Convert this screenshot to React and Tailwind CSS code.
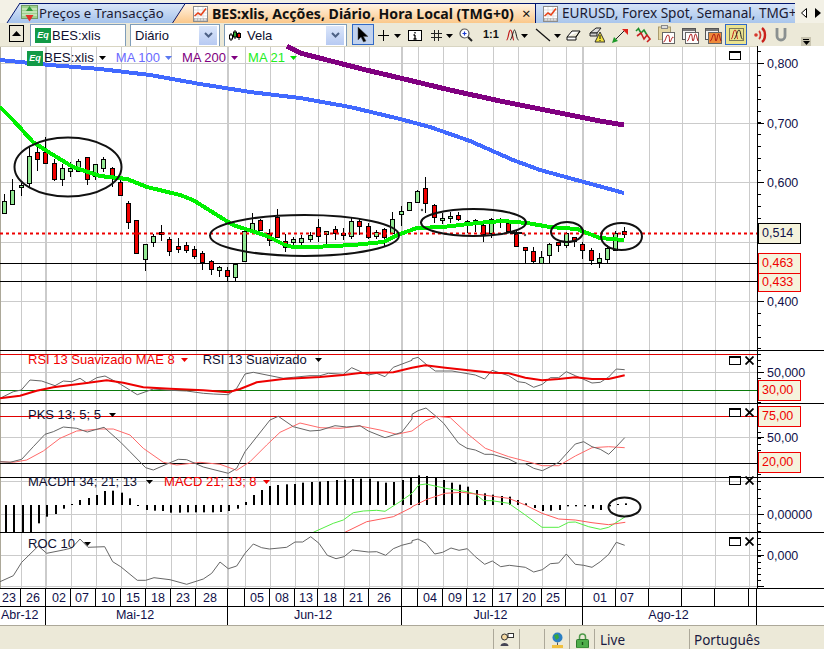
import React from "react";

const VX = [[21],[46,1],[71],[96],[121],[146],[171],[196],[228,1],[245],[270],[295],[318],[344],[369],[402,1],[418],[443],[467],[493],[518],[542],[566],[583,1],[616],[649],[682],[715],[749]];

const scale = (ox, oy) => (pts) => pts.map(([x, y]) => `${(ox + x / 3).toFixed(1)},${(oy + y / 3).toFixed(1)}`).join(" ");
const Z6 = scale(0, 345), Z7 = scale(412, 345), Z8 = scale(0, 470), Z9 = scale(412, 470);

const raw3 = [[13,282,304,338,340,"g"],[37,237,271,313,314,"g"],[64,248,255,262,288,"g"],[88,140,168,248,262,"g"],[112,130,156,176,212,"r"],[136,112,157,190,192,"r"],[163,178,190,236,242,"r"],[187,192,205,236,257,"g"],[211,187,205,212,230,"g"],[235,178,184,212,212,"g"],[262,172,172,236,254,"r"],[286,192,193,228,240,"g"],[310,172,178,203,216,"g"],[337,200,204,228,260,"r"],[361,240,246,284,287,"r"],[385,303,310,367,386,"r"],[409,360,361,458,460,"r"],[436,432,433,476,512,"g"],[460,402,408,425,440,"g"],[484,375,397,403,422,"r"],[508,412,418,452,468,"r"],[535,414,438,446,458,"r"],[559,426,435,449,460,"r"],[583,438,448,467,478,"r"],[607,452,460,485,510,"r"],[634,480,484,508,525,"r"],[658,498,502,509,530,"g"],[682,502,511,529,545,"r"],[706,488,492,532,542,"g"],[733,394,394,482,482,"g"],[757,340,370,389,390,"g"],[781,358,361,390,392,"r"],[806,388,400,420,438,"r"]];
const raw4 = [[22,147,170,232,235,"r"],[46,222,244,262,275,"r"],[70,230,238,245,258,"g"],[94,225,234,245,258,"g"],[121,215,225,236,245,"g"],[145,178,200,229,245,"r"],[169,214,214,223,252,"g"],[196,198,208,218,240,"r"],[220,204,218,224,240,"r"],[244,172,184,229,238,"g"],[268,178,182,198,225,"r"],[295,190,198,230,236,"r"],[319,210,216,228,236,"g"],[343,205,208,232,258,"r"],[367,157,178,218,220,"g"],[394,138,154,161,197,"g"],[418,125,126,149,152,"g"],[442,90,93,127,130,"g"],[466,52,85,130,160,"r"],[493,132,136,172,188,"r"],[517,158,175,181,192,"g"],[541,155,168,175,190,"g"],[565,155,165,178,182,"r"],[592,180,184,186,218,"g"],[616,178,181,185,215,"g"],[640,192,196,222,245,"r"],[664,175,176,220,235,"g"],[691,175,178,182,203,"g"],[715,190,190,212,215,"r"],[739,214,222,257,258,"r"]];
const raw5 = [[75,232,232,241,283,"r"],[99,232,244,274,283,"r"],[124,244,262,280,283,"g"],[148,218,222,256,278,"g"],[175,215,216,224,245,"r"],[199,185,188,226,234,"g"],[223,202,202,213,232,"r"],[247,215,222,240,266,"r"],[274,235,241,271,284,"r"],[298,250,265,275,293,"g"],[322,225,235,268,280,"g"],[346,182,188,241,244,"g"],[373,172,184,191,205,"r"]];
const conv = (ox, oy, arr) => arr.map(([x, a, b, c, d, k]) => ({ x: Math.round(ox + x / 3), wt: Math.round(oy + a / 3), bt: Math.round(oy + b / 3), bb: Math.round(oy + c / 3), wb: Math.round(oy + d / 3), k }));
const candles = [...conv(0, 100, raw3), ...conv(270, 160, raw4), ...conv(500, 170, raw5)];

const MA100 = "0,60 50,65 100,69 150,75 200,84 250,92 300,98 350,107 400,119 430,127 470,141 513,160 540,170 624,193";
const MA200 = "287,46 300,53 366,70 400,78 450,90 500,101 550,111 600,121 624,125";
const MA21 = "0,107 13,120 33,142 50,153 73,167 100,176 127,179 147,187 180,195 193,200 217,215 233,225 267,236 285,245 293,247 313,247 353,245 383,242 400,234 417,228 443,227 477,223 503,221 527,223 550,227 577,229 587,233 600,238 624,240";

const rsiK = Z6([[0,160],[40,140],[64,135],[90,105],[125,108],[165,122],[190,108],[215,110],[240,100],[262,115],[290,98],[315,93],[362,118],[412,149],[460,132],[510,136],[560,138],[610,145],[640,147],[685,149],[710,130],[735,87],[760,82],[850,100],[880,97],[930,92],[960,92],[985,85],[1030,88],[1055,68],[1105,90],[1130,85],[1155,95],[1180,67],[1236,46]]) + " " + Z7([[0,42],[18,37],[45,60],[70,78],[120,78],[190,90],[218,102],[240,76],[290,92],[318,110],[340,113],[365,127],[391,118],[415,98],[440,98],[463,80],[490,92],[540,114],[565,112],[590,96],[613,72],[638,74]]);
const rsiR = Z6([[0,160],[60,152],[110,137],[160,127],[260,114],[320,106],[370,113],[430,127],[510,131],[610,136],[685,142],[720,132],[770,112],[850,102],[960,96],[1030,90],[1080,84],[1180,82],[1236,68]]) + " " + Z7([[0,68],[40,61],[100,68],[190,78],[240,83],[290,85],[340,98],[390,106],[440,102],[490,97],[540,102],[590,102],[638,91]]);
const pksK = Z6([[0,350],[30,352],[65,343],[100,305],[135,268],[160,260],[190,246],[230,250],[262,261],[312,247],[362,292],[390,320],[437,368],[460,375],[510,353],[535,343],[560,344],[610,366],[685,385],[710,370],[735,320],[810,225],[835,214],[880,245],[930,258],[960,256],[1005,242],[1040,246],[1080,242],[1105,258],[1155,278],[1205,262],[1236,222]]) + " " + Z7([[0,208],[18,197],[42,189],[70,212],[95,235],[140,295],[165,310],[190,315],[218,328],[240,328],[290,342],[318,356],[340,356],[365,370],[391,377],[415,365],[440,352],[490,297],[515,290],[540,305],[565,313],[590,328],[613,305],[638,278]]);
const pksR = Z6([[0,350],[40,352],[80,345],[130,318],[180,280],[230,258],[300,252],[340,252],[390,270],[430,310],[490,352],[530,360],[600,352],[660,358],[710,376],[750,350],[800,300],[840,262],[900,234],[960,248],[1020,250],[1080,243],[1140,255],[1190,268],[1236,258]]) + " " + Z7([[0,258],[40,228],[75,214],[115,218],[165,265],[220,310],[290,335],[340,348],[391,362],[440,362],[490,333],[540,308],[590,305],[638,308]]);
const macdG = Z8([[940,187],[1000,160],[1030,150],[1060,128],[1090,123],[1130,121],[1155,124],[1200,95],[1236,70]]) + " " + Z9([[0,70],[20,45],[42,42],[100,55],[165,65],[190,72],[215,92],[240,92],[290,100],[340,135],[390,172],[440,172],[470,157],[490,156],[530,170],[565,178],[590,172],[640,140]]);
const macdR = Z8([[1035,187],[1100,155],[1180,140],[1236,112]]) + " " + Z9([[0,110],[45,88],[100,70],[150,67],[190,72],[290,85],[340,105],[390,130],[440,147],[490,150],[540,158],[590,164],[640,157]]);
const roc = Z8([[0,335],[40,317],[65,277],[115,228],[140,250],[190,240],[215,234],[240,207],[264,232],[314,230],[338,275],[362,290],[412,331],[437,331],[462,323],[510,329],[560,343],[610,327],[635,310],[660,276],[685,296],[710,288],[735,250],[760,222],[785,233],[808,237],[860,232],[885,216],[908,216],[932,200],[957,220],[982,256],[1008,266],[1032,260],[1057,240],[1105,246],[1130,245],[1157,256],[1180,236],[1205,226],[1236,218]]) + " " + Z9([[0,212],[18,207],[42,220],[68,252],[92,247],[117,234],[141,241],[166,236],[190,260],[218,283],[241,273],[266,290],[292,286],[340,292],[365,306],[391,299],[415,281],[440,279],[463,252],[490,283],[515,286],[540,292],[565,275],[590,253],[613,217],[638,226]]);

const barsZ8 = [[14,187],[40,187],[66,187],[90,187],[114,160],[138,140],[164,132],[188,116],[212,102],[237,90],[264,84],[288,75],[313,63],[337,62],[362,68],[387,85],[412,107],[437,120],[462,122],[487,123],[510,128],[536,128],[560,127],[585,127],[610,127],[635,127],[660,126],[685,123],[710,116],[735,96],[758,75],[782,60],[807,48],[832,45],[857,43],[882,42],[907,38],[932,36],[957,35],[982,33],[1007,30],[1032,29],[1057,27],[1081,26],[1106,26],[1130,34],[1155,38],[1180,36],[1205,30],[1230,22]];
const barsZ9 = [[17,16],[42,18],[68,22],[93,30],[117,38],[141,44],[166,50],[192,60],[216,70],[240,74],[266,78],[290,80],[315,90],[340,100],[365,114],[390,123],[415,122],[441,120],[465,109],[490,109],[515,109],[540,116],[565,120],[590,109],[615,102],[640,100]];
const macdBars = [...barsZ8.map(([x, y]) => [x / 3, y]), ...barsZ9.map(([x, y]) => [412 + x / 3, y])];

function Grid({ y0, y1, hs }) {
  return (
    <g>
      {VX.map(([x, t]) => (
        <line key={x} x1={x + (t ? 0 : 0.5)} x2={x + (t ? 0 : 0.5)} y1={y0} y2={y1} stroke="#cbcbcb" strokeWidth={t ? 2 : 1} />
      ))}
      {hs.map((y) => (
        <line key={y} x1="0" x2="757" y1={y + 0.5} y2={y + 0.5} stroke="#cbcbcb" strokeWidth="1" />
      ))}
      <line x1="0.5" x2="0.5" y1={y0} y2={y1} stroke="#aca899" />
    </g>
  );
}

function Plot({ top, h, hs, children }) {
  return (
    <svg width="757" height={h} viewBox={`0 ${top} 757 ${h}`} className="block overflow-visible">
      <Grid y0={top} y1={top + h} hs={hs} />
      {children}
    </svg>
  );
}

function Axis({ top, h, majors, step, first, labels }) {
  const t = [];
  for (let y = first; y < top + h; y += step) t.push(Math.round(y));
  return (
    <svg width="67" height={h} viewBox={`757 ${top} 67 ${h}`} className="block">
      <line x1="757.5" x2="757.5" y1={top} y2={top + h} stroke="#000" />
      {t.map((y, i) => (
        <line key={i} x1="758" x2="761" y1={y + 0.5} y2={y + 0.5} stroke="#000" />
      ))}
      {majors.map((y) => (
        <line key={y} x1="758" x2="764" y1={y + 0.5} y2={y + 0.5} stroke="#000" />
      ))}
      {labels.map(([y, s]) => (
        <text key={s} x="767" y={y + 5} fontSize="12.5" fill="#10104a" fontFamily="'Liberation Sans', sans-serif">{s}</text>
      ))}
    </svg>
  );
}

const Drop = ({ color = "#000", className = "" }) => (
  <svg width="7" height="4" viewBox="0 0 7 4" className={`block shrink-0 ${className}`}><path d="M0 0H7L3.5 4Z" fill={color} /></svg>
);

const PanelBtns = ({ x = true, className }) => (
  <div className={`absolute left-[729px] flex items-center gap-[4px] ${className}`}>
    <svg width="12" height="9" viewBox="0 0 12 9" className="block"><rect x="0.5" y="0.5" width="11" height="8" fill="none" stroke="#000" /><line x1="0" x2="12" y1="1.5" y2="1.5" stroke="#000" /></svg>
    {x && <svg width="9" height="9" viewBox="0 0 9 9" className="block"><path d="M0.5 0.5L8.5 8.5M8.5 0.5L0.5 8.5" stroke="#000" strokeWidth="1.8" /></svg>}
  </div>
);

const Tag = ({ children, className }) => (
  <div className={`absolute left-[1px] w-[43px] border flex items-center pl-[3px] bg-[#f5f3dc] text-[12.5px] ${className}`}>{children}</div>
);

const Eq = ({ className = "" }) => (
  <div className={`w-[16px] h-[15px] shrink-0 bg-[#129a46] flex items-center justify-center text-white text-[9px] leading-none font-bold italic ${className}`}>Eq</div>
);

const ChartIcon = () => (
  <svg width="15" height="16" viewBox="0 0 15 16" className="block shrink-0">
    <rect x="0.5" y="0.5" width="14" height="15" fill="#fff" stroke="#8c8c8c" />
    <path d="M1 4H14M1 7H14M1 10H14M5 1V12M10 1V12" stroke="#d5d5d5" strokeWidth="0.7" />
    <path d="M1.5 10L5 7L8 9L13 2.5" fill="none" stroke="#e8431a" strokeWidth="1.6" />
    <rect x="1" y="12" width="13" height="3" fill="#b9b9b9" />
    <path d="M3 12.5V14.5M6 12.5V14.5M9 12.5V14.5M12 12.5V14.5" stroke="#fff" />
  </svg>
);

const TableIcon = () => (
  <svg width="17" height="17" viewBox="0 0 17 17" className="block shrink-0">
    <rect x="0.5" y="0.5" width="16" height="13" fill="#9ed28e" stroke="#6f9a65" />
    <path d="M1 4H16M1 7H16M1 10H16" stroke="#e6f4dd" />
    <path d="M8.5 1L12 6H5Z" fill="#2f9a3a" />
    <path d="M4.5 10H12.5L8.5 16.5Z" fill="#e2302a" />
  </svg>
);

const Chevron = () => (
  <div className="absolute right-[2px] top-[1px] w-[18px] h-[19px] bg-gradient-to-b from-[#dbe6fa] to-[#b7caf2] flex items-center justify-center">
    <svg width="9" height="7" viewBox="0 0 9 7" className="block"><path d="M1 1L4.5 4.5L8 1" fill="none" stroke="#4d6185" strokeWidth="2" /></svg>
  </div>
);

const MiniChart = ({ className = "", bg = "#fff" }) => (
  <svg width="17" height="18" viewBox="0 0 17 18" className={`block ${className}`}>
    <rect x="0.5" y="2.5" width="13" height="11" fill="#f2f2f2" stroke="#555" />
    <rect x="1" y="3" width="12" height="2" fill="#777" />
    <rect x="3.5" y="6.5" width="13" height="11" fill={bg} stroke="#666" />
    <path d="M5 15C7 15 7.5 8 9 8S10 15 11 15 12.5 8 13.5 8 15 13 16 15" fill="none" stroke="#a11" strokeWidth="1" />
  </svg>
);

function Toolbar() {
  return (
    <div className="h-[23px] flex items-start bg-[#ece9d8] shrink-0">
      <div className="ml-[9px] mt-[2px] w-[15px] h-[17px] border border-black flex items-center justify-center">
        <svg width="9" height="5" viewBox="0 0 9 5" className="block"><path d="M4.5 0L9 5H0Z" fill="#000" /></svg>
      </div>
      <div className="ml-[6px] mt-[1px] w-[96px] h-[22px] bg-white border border-b-0 border-[#7f9db9] flex items-center pl-[4px] gap-px text-[13px] text-[#101030]">
        <Eq /><span>BES:xlis</span>
      </div>
      <div className="ml-[4px] mt-[1px] w-[90px] h-[22px] bg-white border border-b-0 border-[#7f9db9] relative flex items-center pl-[4px] text-[13px] text-[#101030]">
        <span>Diário</span><Chevron />
      </div>
      <div className="ml-[4px] mt-[1px] w-[123px] h-[22px] bg-white border border-b-0 border-[#7f9db9] relative flex items-center pl-[4px] gap-[6px] text-[13px] text-[#101030]">
        <svg width="12" height="12" viewBox="0 0 12 12" className="block shrink-0">
          <path d="M2 3V11M6 0V9M10 2V10" stroke="#000" /><rect x="0.5" y="5" width="3" height="4" fill="#fff" stroke="#000" /><rect x="4.5" y="2" width="3" height="5" fill="#2aa52a" stroke="#000" /><rect x="8.5" y="3.5" width="3" height="4" fill="#e00" stroke="#000" />
        </svg>
        <span>Vela</span><Chevron />
      </div>
      <div className="ml-[5px] mt-[1px] w-[22px] h-[21px] bg-[#c1d2ee] border border-[#3169c6] flex items-center justify-center">
        <svg width="12" height="17" viewBox="0 0 12 17" className="block"><path d="M1 1V14L4 11L6.5 16L9 15L6.5 10.5H11Z" fill="#000" stroke="#555" strokeWidth="0.5" /></svg>
      </div>
      <svg width="11" height="11" viewBox="0 0 11 11" className="block ml-[4px] mt-[7px]"><path d="M5.5 0V11M0 5.5H11" stroke="#000" /></svg>
      <Drop className="ml-[5px] mt-[11px]" />
      <svg width="14" height="11" viewBox="0 0 14 11" className="block ml-[7px] mt-[7px]"><rect x="0.5" y="0.5" width="13" height="10" fill="#fff" stroke="#000" /><path d="M7 2V3.5M7 5V9M5.5 5H7M5.5 9H8.5" stroke="#000" strokeWidth="1.3" /></svg>
      <svg width="11" height="11" viewBox="0 0 11 11" className="block ml-[9px] mt-[7px]"><path d="M0 3.5H11M0 7.5H11M3.5 0V11M7.5 0V11" stroke="#222" /></svg>
      <Drop className="ml-[4px] mt-[11px]" />
      <svg width="14" height="14" viewBox="0 0 14 14" className="block ml-[6px] mt-[5px]"><circle cx="5.5" cy="5.5" r="4.5" fill="#fff" stroke="#555" strokeWidth="1.2" /><path d="M3.5 5.5H7.5M5.5 3.5V7.5" stroke="#1a3ad0" strokeWidth="1.2" /><path d="M9 9L13 13" stroke="#222" strokeWidth="2" /></svg>
      <span className="ml-[10px] mt-[3px] w-[13px] text-[11px] font-bold leading-[16px] text-[#111]">1:1</span>
      <svg width="13" height="12" viewBox="0 0 13 12" className="block ml-[10px] mt-[6px]"><path d="M0.5 11C2.5 11 2.5 1 4.5 1S6.5 11 8 11" fill="none" stroke="#c01818" strokeWidth="1.2" /><path d="M4 11C6 11 7 1 8.5 1S10.5 11 12.5 11" fill="none" stroke="#222" strokeWidth="1" /></svg>
      <Drop className="ml-[2px] mt-[11px]" />
      <svg width="16" height="14" viewBox="0 0 16 14" className="block ml-[7px] mt-[5px]"><path d="M1 1L15 13" stroke="#111" strokeWidth="1.2" /></svg>
      <Drop className="ml-[3px] mt-[11px]" />
      <svg width="15" height="11" viewBox="0 0 15 11" className="block ml-[5px] mt-[7px]"><path d="M1 7L6 1H14L10 7V10H1Z M1 7H10L14 1" fill="#fff" stroke="#111" /></svg>
      <svg width="16" height="16" viewBox="0 0 16 16" className="block ml-[8px] mt-[4px]"><path d="M1 6L7 1H12L8 6Z" fill="#ddd" stroke="#222" /><path d="M1 6H8V9H1Z" fill="#ccc" stroke="#222" /><path d="M11 5L16 15H6Z" fill="#f2e23a" stroke="#333" /><path d="M11 8V12M11 13V14" stroke="#111" /></svg>
      <svg width="16" height="16" viewBox="0 0 16 16" className="block ml-[7px] mt-[4px]"><path d="M2 14L14 2" stroke="#222" /><path d="M0 16L2 10L6 14Z" fill="#1f9a2a" /><path d="M10 2H16V8Z" fill="#e0201a" /></svg>
      <svg width="16" height="16" viewBox="0 0 16 16" className="block ml-[7px] mt-[4px]"><path d="M1 4L4 1M3 1L6 6L9 3L12 8" fill="none" stroke="#1d8c2c" strokeWidth="1.6" /><path d="M2 9L6 6L9 12L12 8L15 12L12 15" fill="none" stroke="#c82020" strokeWidth="1.6" /></svg>
      <div className="ml-[7px] mt-[2px] relative w-[17px] h-[20px]">
        <svg width="13" height="15" viewBox="0 0 13 15" className="block absolute left-0 top-0"><rect x="0.5" y="2" width="12" height="13" fill="#e5d7a4" stroke="#a99b6e" /><rect x="3.5" y="0.5" width="6" height="3" fill="#ddd" stroke="#888" /></svg>
        <svg width="13" height="12" viewBox="0 0 13 12" className="block absolute left-[4px] top-[7px]"><rect x="0.5" y="0.5" width="12" height="11" fill="#fff" stroke="#666" /><path d="M1.5 10C3.5 10 4 3 6 3S7 10 8 10 10 3 11.5 6" fill="none" stroke="#a11" /></svg>
      </div>
      <MiniChart className="ml-[7px] mt-[3px]" />
      <div className="ml-[6px] mt-[3px] relative w-[17px] h-[18px]">
        <MiniChart bg="#ee8a3a" />
      </div>
      <div className="ml-[3px] mt-[1px] w-[22px] h-[21px] bg-[#eae38f] border border-[#3169c6] flex items-center justify-center">
        <svg width="15" height="13" viewBox="0 0 15 13" className="block"><rect x="0.5" y="0.5" width="14" height="12" fill="none" stroke="#7a7a5a" /><path d="M2 11C4 11 4 2 6 2S7.5 11 9 11" fill="none" stroke="#c01818" /><path d="M5 11C7 11 8 2 10 2S11.5 11 13.5 11" fill="none" stroke="#222" /></svg>
      </div>
      <svg width="13" height="16" viewBox="0 0 13 16" className="block ml-[7px] mt-[4px]"><path d="M8 1C12 4 12 12 8 15" fill="none" stroke="#c9221c" strokeWidth="2.4" /><path d="M5 4C7 6 7 10 5 12" fill="none" stroke="#d6382e" strokeWidth="1.8" /><circle cx="2" cy="8" r="1.8" fill="#d6382e" /></svg>
      <svg width="12" height="14" viewBox="0 0 12 14" className="block ml-[8px] mt-[5px]"><path d="M2 0V8A4 4 0 0 0 10 8V0" fill="none" stroke="#8a9090" strokeWidth="2.8" /></svg>
      <div className="ml-[14px] mt-[14px] w-[10px] h-[9px] bg-[#c8c4b0] flex flex-col items-center justify-center gap-px">
        <div className="w-[6px] h-px bg-black" />
        <Drop />
      </div>
    </div>
  );
}

const tabFont = { fontFamily: "'Noto Sans', sans-serif" };

function Tabs() {
  return (
    <div className="h-[23px] relative shrink-0 bg-[#f3f1e6] flex items-end overflow-hidden pt-[3px]" style={tabFont}>
      <div className="ml-[7px] -mr-[13px] w-[178px] h-full border-t border-[#00146e] bg-gradient-to-b from-[#dae6f7] to-[#a5c3ec] flex items-center pl-[14px] gap-[1px] text-[13.2px] text-[#1a1a33] [clip-path:polygon(13px_0,100%_0,calc(100%-13px)_100%,0_100%)]">
        <TableIcon /><span className="whitespace-nowrap">Preços e Transacção</span>
      </div>
      <div className="w-[363px] h-full border-t border-[#00146e] bg-gradient-to-b from-[#fff3e2] to-[#fbc88a] flex items-center pl-[21px] gap-[4px] text-[14.1px] font-bold text-[#111] whitespace-nowrap [clip-path:polygon(13px_0,100%_0,100%_100%,0_100%)] relative">
        <ChartIcon /><span>BES:xlis, Acções, Diário, Hora Local (TMG+0)</span>
        <span className="absolute left-[350px] top-[0px] text-[15px] font-normal leading-[18px]">×</span>
      </div>
      <div className="w-[260px] h-full border-t border-l border-[#00146e] bg-gradient-to-b from-[#d6e3f7] to-[#a9c6ec] flex items-center pl-[7px] gap-[4px] text-[13.6px] text-[#1a1a33] whitespace-nowrap overflow-hidden">
        <ChartIcon /><span>EURUSD, Forex Spot, Semanal, TMG+0</span>
      </div>
      <div className="flex-1 h-full flex items-center justify-center gap-[8px] pl-[2px]">
        <svg width="6" height="10" viewBox="0 0 6 10" className="block"><path d="M5.5 0.5V9.5L0.5 5Z" fill="#fff" stroke="#000" /></svg>
        <svg width="6" height="10" viewBox="0 0 6 10" className="block"><path d="M0 0V10L6 5Z" fill="#000" /></svg>
      </div>
      <svg width="30" height="20" viewBox="0 0 30 20" className="absolute left-[6px] top-[3px]"><path d="M1 20L14 0" stroke="#00146e" fill="none" /></svg>
      <svg width="16" height="20" viewBox="0 0 16 20" className="absolute left-[172px] top-[3px]"><path d="M0.5 20L13.5 0" stroke="#00146e" fill="none" /></svg>
    </div>
  );
}

function Legend({ className, children }) {
  return <div className={`absolute left-[28px] flex items-center text-[13px] leading-[16px] whitespace-nowrap ${className}`}>{children}</div>;
}

const cells = [
  ["23","pl-[2px]"],["26","pl-[5px]"],["02","pl-[6px]"],["07","pl-[4px]"],["10","pl-[5px]"],["15","pl-[5px]"],["18","pl-[5px]"],["23","pl-[5px]"],["28","pl-[7px]"],
  ["",""],["05","pl-[5px]"],["08","pl-[5px]"],["13","pl-[4px]"],["18","pl-[5px]"],["21","pl-[5px]"],["26","pl-[8px]"],["",""],
  ["04","pl-[5px]"],["09","pl-[5px]"],["12","pl-[5px]"],["17","pl-[5px]"],["20","pl-[4px]"],["25","pl-[4px]"],["",""],["01","pl-[10px]"],["07","pl-[4px]"],["",""],["",""],["",""],["",""],
];

export default function App() {
  return (
    <div className="w-[824px] h-[649px] overflow-hidden bg-[#ece9d8] flex flex-col text-black" style={{ fontFamily: "'Liberation Sans', Arial, sans-serif" }}>
      <Tabs />
      <Toolbar />

      {/* main price panel */}
      <div className="h-[304px] flex bg-white relative shrink-0">
        <Plot top={46} h={304} hs={[63, 123, 182, 242, 301]}>
          <rect x="0" y="46" width="757" height="1" fill="#d8d5c2" />
          <line x1="0" x2="757" y1="263.5" y2="263.5" stroke="#000" />
          <line x1="0" x2="757" y1="281.5" y2="281.5" stroke="#000" />
          <polyline points={MA100} fill="none" stroke="#4169ff" strokeWidth="4" shapeRendering="crispEdges" />
          <polyline points={MA200} fill="none" stroke="#800080" strokeWidth="5" shapeRendering="crispEdges" />
          {candles.map((c, i) => (
            <g key={i}>
              <line x1={c.x + 0.5} x2={c.x + 0.5} y1={c.wt} y2={c.wb} stroke="#000" />
              <rect x={c.x - 1.5} y={c.bt + 0.5} width="4" height={Math.max(1, c.bb - c.bt)} fill={c.k === "g" ? "#92e892" : "#f00000"} stroke="#000" />
            </g>
          ))}
          <line x1="0" x2="757" y1="233.5" y2="233.5" stroke="#ee0000" strokeWidth="2" strokeDasharray="3 3" />
          <polyline points={MA21} fill="none" stroke="#00f000" strokeWidth="4" shapeRendering="crispEdges" />
          <ellipse cx="68" cy="167" rx="53.5" ry="29.5" fill="none" stroke="#111" strokeWidth="2" />
          <ellipse cx="304.5" cy="235.5" rx="94.5" ry="20.5" fill="none" stroke="#111" strokeWidth="2" />
          <ellipse cx="473.5" cy="222.5" rx="52.5" ry="13.5" fill="none" stroke="#111" strokeWidth="2" />
          <ellipse cx="567" cy="232" rx="16" ry="10" fill="none" stroke="#111" strokeWidth="2" />
          <ellipse cx="621.5" cy="236.5" rx="20.5" ry="13.5" fill="none" stroke="#111" strokeWidth="2" />
          <circle cx="422" cy="210" r="1.2" fill="#555" />
          <circle cx="525" cy="235" r="1.2" fill="#555" />
          <path d="M510 233H522" stroke="#111" strokeWidth="2" />
        </Plot>
        <Legend className="top-[4px] gap-[5px]">
          <Eq className="-ml-[1px] -mr-[4px]" />
          <span className="text-[#101030] text-[13.4px]">BES:xlis</span><Drop />
          <span className="ml-[5px] text-[#6a6aff]">MA 100</span><Drop color="#5a78f0" />
          <span className="ml-[5px] text-[#800080]">MA 200</span><Drop color="#800080" />
          <span className="ml-[5px] text-[#22ee22]">MA 21</span><Drop color="#00dd00" />
        </Legend>
        <PanelBtns x={false} className="top-[5px]" />
        <div className="relative">
          <Axis top={46} h={304} first={51} step={11.9} majors={[63, 123, 182, 242, 301]} labels={[[63, "0,800"], [123, "0,700"], [182, "0,600"], [301, "0,400"]]} />
          <Tag className="top-[177px] h-[21px] border-black text-[#10104a]">0,514</Tag>
          <Tag className="top-[207px] h-[21px] border-[#f00000] text-[#f00000]">0,463</Tag>
          <Tag className="top-[227px] h-[19px] border-[#f00000] text-[#f00000]">0,433</Tag>
        </div>
      </div>

      {/* RSI */}
      <div className="h-[53px] flex bg-white relative border-t border-black shrink-0">
        <Plot top={351} h={52} hs={[372]}>
          <line x1="0" x2="757" y1="354.5" y2="354.5" stroke="#e00000" />
          <line x1="0" x2="757" y1="390.5" y2="390.5" stroke="#0a7a0a" />
          <polyline points={rsiK} fill="none" stroke="#666" strokeWidth="1" />
          <polyline points={rsiR} fill="none" stroke="#ee0000" strokeWidth="2" />
        </Plot>
        <Legend className="top-[1px] gap-[6px]">
          <span className="text-[#f00000]">RSI 13 Suavizado MAE 8</span><Drop color="#f00000" />
          <span className="ml-[9px] text-[#101030]">RSI 13 Suavizado</span><Drop className="ml-[2px]" />
        </Legend>
        <PanelBtns className="top-[5px]" />
        <div className="relative">
          <Axis top={351} h={52} first={354} step={6} majors={[372]} labels={[[372, "50,000"]]} />
          <Tag className="top-[29px] h-[21px] border-[#f00000] text-[#f00000]">30,00</Tag>
        </div>
      </div>

      {/* PKS */}
      <div className="h-[74px] flex bg-white relative border-t border-black shrink-0">
        <Plot top={404} h={73} hs={[437]}>
          <line x1="0" x2="757" y1="416.5" y2="416.5" stroke="#e00000" />
          <line x1="0" x2="757" y1="463.5" y2="463.5" stroke="#000" />
          <polyline points={pksR} fill="none" stroke="#ff6a6a" strokeWidth="1" />
          <polyline points={pksK} fill="none" stroke="#666" strokeWidth="1" />
        </Plot>
        <Legend className="top-[3px] gap-[6px]">
          <span className="text-[#101030]">PKS 13; 5; 5</span><Drop className="ml-[2px]" />
        </Legend>
        <PanelBtns className="top-[4px]" />
        <div className="relative">
          <Axis top={404} h={73} first={408} step={6} majors={[437]} labels={[[437, "50,00"]]} />
          <Tag className="top-[2px] h-[21px] border-[#f00000] text-[#f00000]">75,00</Tag>
          <Tag className="top-[48px] h-[21px] border-[#f00000] text-[#f00000]">20,00</Tag>
        </div>
      </div>

      {/* MACD */}
      <div className="h-[55px] flex bg-white relative border-t border-black shrink-0">
        <Plot top={478} h={54} hs={[481, 514]}>
          {macdBars.map(([x, z], i) => {
            const X = Math.round(x);
            const base = 505;
            const y = 470 + z / 3;
            const y1 = Math.min(base, y), y2 = Math.max(base, y);
            return <rect key={i} x={X} y={y1} width="2" height={Math.max(1, y2 - y1)} fill="#000" />;
          })}
          <polyline points={macdG} fill="none" stroke="#55ee44" strokeWidth="1" />
          <polyline points={macdR} fill="none" stroke="#ff5a5a" strokeWidth="1" />
          <ellipse cx="624.5" cy="507" rx="16" ry="9.5" fill="none" stroke="#111" strokeWidth="2" />
        </Plot>
        <Legend className="top-[-4px] gap-[6px]">
          <span className="text-[#101030]">MACDH 34; 21; 13</span><Drop className="ml-[3px]" />
          <span className="ml-[5px] text-[#f00000]">MACD 21; 13; 8</span><Drop color="#f00000" />
        </Legend>
        <PanelBtns className="top-[-2px]" />
        <Axis top={478} h={54} first={481} step={8.3} majors={[514]} labels={[[514, "0,00000"]]} />
      </div>

      {/* ROC */}
      <div className="h-[56px] flex bg-white relative border-t border-black shrink-0">
        <Plot top={533} h={55} hs={[555, 586]}>
          <polyline points={roc} fill="none" stroke="#666" strokeWidth="1" />
        </Plot>
        <Legend className="top-[3px] gap-[6px]">
          <span className="text-[#101030]">ROC 10</span><Drop className="ml-[3px]" />
        </Legend>
        <PanelBtns className="top-[4px]" />
        <Axis top={533} h={55} first={538} step={6} majors={[555, 586]} labels={[[555, "0,000"]]} />
      </div>

      {/* dates */}
      <div className="h-[18px] flex bg-white border-t border-black shrink-0 text-[12.5px] text-[#10104a]">
        <div className="grid grid-cols-[21px_25px_25px_25px_25px_25px_25px_25px_32px_17px_25px_25px_23px_26px_25px_33px_16px_25px_24px_26px_25px_24px_24px_17px_33px_33px_33px_33px_34px_8px] w-[757px] h-full">
          {cells.map(([s, p], i) => (
            <div key={i} className={`border-r border-black leading-[18px] h-full ${p}`}>{s}</div>
          ))}
        </div>
      </div>
      <div className="h-[19px] flex bg-white border-t border-black shrink-0 text-[12.5px] text-[#10104a]">
        <div className="grid grid-cols-[46px_182px_174px_181px_174px] w-[757px] h-full leading-[17px]">
          <div className="border-r border-black pl-[1px]">Abr-12</div>
          <div className="border-r border-black text-center pr-[3px]">Mai-12</div>
          <div className="border-r border-black text-center pr-[3px]">Jun-12</div>
          <div className="border-r border-black text-center pr-[3px]">Jul-12</div>
          <div className="border-r border-black text-center pr-[2px]">Ago-12</div>
        </div>
      </div>

      {/* status bar */}
      <div className="flex-1 border-t border-[#aca899] pt-[3px] flex items-stretch text-[13.5px] text-[#1a1a40]" style={tabFont}>
        <div className="ml-[493px] w-[26px] border-l border-[#aca899] flex items-center justify-center">
          <svg width="14" height="13" viewBox="0 0 14 13" className="block -mt-[1px]"><circle cx="4.5" cy="4" r="3" fill="#f4d8a0" stroke="#333" /><path d="M0.5 13C0.5 9 8.5 9 8.5 13Z" fill="#445" /><rect x="8" y="0.5" width="5.5" height="4" fill="#fff" stroke="#333" /></svg>
        </div>
        <div className="w-[25px] border-l border-[#aca899]" />
        <div className="w-[25px] border-l border-[#aca899] flex items-center justify-center">
          <svg width="13" height="16" viewBox="0 0 13 16" className="block"><circle cx="6.5" cy="5.5" r="5" fill="#2b7fc4" /><path d="M3 3L7 2L8 6L5 8Z" fill="#3aa83a" /><path d="M6.5 10.5V13" stroke="#555" /><rect x="1" y="13" width="11" height="3" fill="#f0c040" /></svg>
        </div>
        <div className="w-[25px] border-l border-[#aca899] flex items-center justify-center">
          <svg width="13" height="15" viewBox="0 0 13 15" className="block"><path d="M3.5 7V4A3 3 0 0 1 9.5 4V7" fill="none" stroke="#4f9a4a" strokeWidth="1.5" /><rect x="0.5" y="6.5" width="12" height="8.5" rx="1" fill="#4fae4a" stroke="#2f7a2c" /><path d="M6.5 9V12" stroke="#174e16" strokeWidth="1.4" /></svg>
        </div>
        <div className="w-[95px] border-l border-[#aca899] pl-[5px] leading-[22px]">Live</div>
        <div className="flex-1 border-l border-[#aca899] pl-[4px] leading-[22px]">Português</div>
      </div>
    </div>
  );
}
